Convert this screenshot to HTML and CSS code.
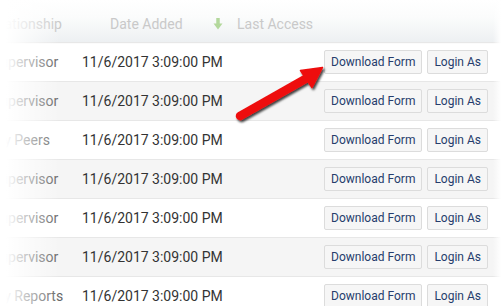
FILE: index.html
```html
<!DOCTYPE html>
<html lang="en">

<head>
    <meta charset="UTF-8">
    <meta name="viewport" content="width=device-width, initial-scale=1.0">
    <title>Users</title>
    <link rel="stylesheet" href="styles.css">
</head>

<body>
    <div id="wrap">
        <div class="grid">
            <div class="head">
                <div class="c-rel">Relationship</div>
                <div class="c-date">Date Added</div>
                <div class="c-sort">
                    <svg width="10" height="13" viewBox="0 0 10 13">
                        <path d="M5 1 V9" stroke="#b3d89c" stroke-width="3.5" />
                        <path d="M0.5 6.5 L5 12.5 L9.5 6.5 Z" fill="#b3d89c" />
                    </svg>
                </div>
                <div class="c-last">Last Access</div>
            </div>

            <div class="row">
                <div class="c-rel">Supervisor</div>
                <div class="c-date">11/6/2017 3:09:00 PM</div>
                <div class="c-btns"><button class="btn">Download Form</button><button class="btn">Login As</button></div>
            </div>
            <div class="row">
                <div class="c-rel">Supervisor</div>
                <div class="c-date">11/6/2017 3:09:00 PM</div>
                <div class="c-btns"><button class="btn">Download Form</button><button class="btn">Login As</button></div>
            </div>
            <div class="row">
                <div class="c-rel">My Peers</div>
                <div class="c-date">11/6/2017 3:09:00 PM</div>
                <div class="c-btns"><button class="btn">Download Form</button><button class="btn">Login As</button></div>
            </div>
            <div class="row">
                <div class="c-rel">Supervisor</div>
                <div class="c-date">11/6/2017 3:09:00 PM</div>
                <div class="c-btns"><button class="btn">Download Form</button><button class="btn">Login As</button></div>
            </div>
            <div class="row">
                <div class="c-rel">Supervisor</div>
                <div class="c-date">11/6/2017 3:09:00 PM</div>
                <div class="c-btns"><button class="btn">Download Form</button><button class="btn">Login As</button></div>
            </div>
            <div class="row">
                <div class="c-rel">Supervisor</div>
                <div class="c-date">11/6/2017 3:09:00 PM</div>
                <div class="c-btns"><button class="btn">Download Form</button><button class="btn">Login As</button></div>
            </div>
            <div class="row">
                <div class="c-rel">My Reports</div>
                <div class="c-date">11/6/2017 3:09:00 PM</div>
                <div class="c-btns"><button class="btn">Download Form</button><button class="btn">Login As</button></div>
            </div>
        </div>

        <div class="fade-left"></div>
        <div class="fade-right"></div>

        <!-- callout arrow pointing at the first Download Form button -->
        <svg class="callout" width="503" height="306" viewBox="0 0 503 306">
            <defs>
                <filter id="sh" x="-20%" y="-20%" width="140%" height="140%">
                    <feDropShadow dx="1.5" dy="2" stdDeviation="1.2" flood-color="#000" flood-opacity="0.75" />
                </filter>
            </defs>
            <g filter="url(#sh)">
                <path d="M240 116 L307 78" stroke="#ee1111" stroke-width="8.5" stroke-linecap="round" />
                <path d="M322.5 67.5 L300.5 70.5 L312 87.5 Z" fill="#ee1111" stroke="#ee1111" stroke-width="1.5" stroke-linejoin="round" />
            </g>
        </svg>
    </div>
</body>

</html>
```

FILE: styles.css
```css
body {
    margin: 0;
    font-family: Roboto, "Liberation Sans", sans-serif;
    background: #fff;
}

#wrap {
    position: relative;
    width: 503px;
    height: 306px;
    overflow: hidden;
}

.grid {
    margin-left: -8px;
    width: 511px;
}

.head,
.row {
    display: grid;
    grid-template-columns: 90px 1fr auto;
    align-items: center;
}

.head {
    box-sizing: border-box;
    grid-template-columns: 118px 103px 24px 1fr;
    height: 42px;
    padding-top: 5px;
    color: #c9c9c9;
    font-size: 14px;
    background: linear-gradient(#fff 0%, #fbfcfc 40%, #edf0f2 100%);
    box-shadow: 0 1px 2px rgba(0, 0, 0, 0.05);
}

.head .c-rel {
    margin-left: -7px;
}

.c-sort svg {
    display: block;
}

.row {
    height: 38px;
    border-top: 1px solid #e7e7e7;
    font-size: 14px;
    color: #333;
}

.row:nth-child(odd) {
    background: #f5f5f5;
}

.row .c-rel {
    color: #666;
    white-space: nowrap;
}

.c-btns {
    display: flex;
    gap: 5px;
    padding-right: 15px;
}

.btn {
    height: 24px;
    padding: 0 6px;
    border: 1px solid #dcdcdc;
    border-radius: 2px;
    background: #f6f6f6;
    color: #263d6c;
    font-family: Roboto, "Liberation Sans", sans-serif;
    font-size: 12px;
}

.fade-left {
    position: absolute;
    top: 0;
    left: 0;
    width: 60px;
    height: 100%;
    background: linear-gradient(to right, #fff 10%, rgba(255, 255, 255, 0.6) 45%, rgba(255, 255, 255, 0) 100%);
}

.fade-right {
    position: absolute;
    top: 0;
    right: 0;
    width: 10px;
    height: 100%;
    background: linear-gradient(to right, rgba(255, 255, 255, 0), #fff 80%);
}

.callout {
    position: absolute;
    top: 0;
    left: 0;
}
```
